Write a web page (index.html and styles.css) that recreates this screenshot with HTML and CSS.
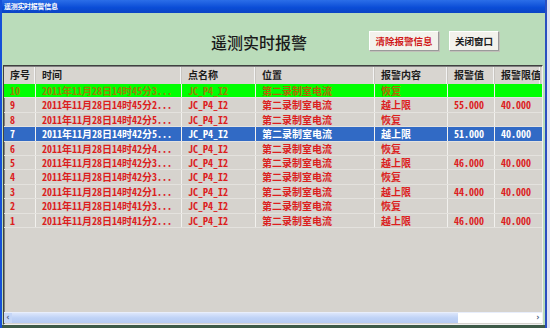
FILE: index.html
```html
<!DOCTYPE html>
<html lang="zh">
<head>
<meta charset="utf-8">
<title>遥测实时报警信息</title>
<link rel="stylesheet" href="styles.css">
</head>
<body>
<div class="desk">
  <div class="window">
    <div class="titlebar">遥测实时报警信息</div>
    <div class="content">
      <div class="top">
        <h1 class="title">遥测实时报警</h1>
        <button class="btn btn-red">清除报警信息</button>
        <button class="btn">关闭窗口</button>
      </div>
      <div class="grid">
        <div class="row head">
          <div class="c c1">序号</div><div class="c c2">时间</div><div class="c c3">点名称</div><div class="c c4">位置</div><div class="c c5">报警内容</div><div class="c c6">报警值</div><div class="c c7">报警限值</div>
        </div>
        <div class="row green">
          <div class="c c1">10</div><div class="c c2">2011年11月28日14时45分3...</div><div class="c c3">JC_P4_I2</div><div class="c c4">第二录制室电流</div><div class="c c5">恢复</div><div class="c c6"></div><div class="c c7"></div>
        </div>
        <div class="row">
          <div class="c c1">9</div><div class="c c2">2011年11月28日14时45分2...</div><div class="c c3">JC_P4_I2</div><div class="c c4">第二录制室电流</div><div class="c c5">越上限</div><div class="c c6">55.000</div><div class="c c7">40.000</div>
        </div>
        <div class="row">
          <div class="c c1">8</div><div class="c c2">2011年11月28日14时42分5...</div><div class="c c3">JC_P4_I2</div><div class="c c4">第二录制室电流</div><div class="c c5">恢复</div><div class="c c6"></div><div class="c c7"></div>
        </div>
        <div class="row sel">
          <div class="c c1">7</div><div class="c c2">2011年11月28日14时42分5...</div><div class="c c3">JC_P4_I2</div><div class="c c4">第二录制室电流</div><div class="c c5">越上限</div><div class="c c6">51.000</div><div class="c c7">40.000</div>
        </div>
        <div class="row">
          <div class="c c1">6</div><div class="c c2">2011年11月28日14时42分4...</div><div class="c c3">JC_P4_I2</div><div class="c c4">第二录制室电流</div><div class="c c5">恢复</div><div class="c c6"></div><div class="c c7"></div>
        </div>
        <div class="row">
          <div class="c c1">5</div><div class="c c2">2011年11月28日14时42分3...</div><div class="c c3">JC_P4_I2</div><div class="c c4">第二录制室电流</div><div class="c c5">越上限</div><div class="c c6">46.000</div><div class="c c7">40.000</div>
        </div>
        <div class="row">
          <div class="c c1">4</div><div class="c c2">2011年11月28日14时42分3...</div><div class="c c3">JC_P4_I2</div><div class="c c4">第二录制室电流</div><div class="c c5">恢复</div><div class="c c6"></div><div class="c c7"></div>
        </div>
        <div class="row">
          <div class="c c1">3</div><div class="c c2">2011年11月28日14时42分1...</div><div class="c c3">JC_P4_I2</div><div class="c c4">第二录制室电流</div><div class="c c5">越上限</div><div class="c c6">44.000</div><div class="c c7">40.000</div>
        </div>
        <div class="row">
          <div class="c c1">2</div><div class="c c2">2011年11月28日14时41分3...</div><div class="c c3">JC_P4_I2</div><div class="c c4">第二录制室电流</div><div class="c c5">恢复</div><div class="c c6"></div><div class="c c7"></div>
        </div>
        <div class="row">
          <div class="c c1">1</div><div class="c c2">2011年11月28日14时41分2...</div><div class="c c3">JC_P4_I2</div><div class="c c4">第二录制室电流</div><div class="c c5">越上限</div><div class="c c6">46.000</div><div class="c c7">40.000</div>
        </div>
        <div class="empty"></div>
        <div class="hscroll">
          <span class="arr">&#8249;</span>
          <div class="thumb"></div>
          <div class="track"></div>
          <span class="arr arr-r">&#8250;</span>
        </div>
      </div>
    </div>
  </div>
  <div class="edge"></div>
</div>
</body>
</html>
```

FILE: styles.css
```css
html, body {
  margin: 0;
  padding: 0;
}
body {
  width: 550px;
  height: 328px;
  overflow: hidden;
  background: #dfe3f3;
  font-family: "Noto Sans CJK SC", sans-serif;
}
.desk {
  display: flex;
  height: 328px;
}
.window {
  width: 543px;
  height: 328px;
  display: flex;
  flex-direction: column;
  border-left: 2px solid #1550d8;
  background: #3d5a48;
}
.edge {
  width: 2px;
  background: #2a4fc0;
}
.titlebar {
  height: 13px;
  flex: none;
  background: linear-gradient(#2b6ee8, #0a4cd6 60%, #0b45c4);
  color: #fff;
  font-size: 7px;
  font-weight: bold;
  line-height: 13px;
  padding-left: 2px;
  letter-spacing: -0.3px;
}
.content {
  flex: 1;
  display: flex;
  flex-direction: column;
  background: #badcba;
  margin-bottom: 3px;
}
.top {
  height: 52px;
  flex: none;
  display: flex;
  align-items: center;
  padding: 4px 0 0 209px;
  box-sizing: border-box;
}
.title {
  margin: 0;
  font-size: 16px;
  font-weight: 500;
  color: #1a1a1a;
  letter-spacing: 0;
  width: 97px;
  margin-top: 2px;
}
.btn {
  height: 20px;
  padding: 0;
  font-family: "Noto Sans CJK SC", sans-serif;
  font-size: 9.5px;
  font-weight: bold;
  color: #202020;
  background: #f3f2ec;
  border: 1px solid;
  border-color: #ffffff #9a9a9a #9a9a9a #ffffff;
  box-shadow: 1px 1px 0 #c0c0b8;
  width: 50px;
  margin-left: 10px;
}
.btn-red {
  color: #d01818;
  width: 70px;
  margin-left: 61px;
}
.grid {
  flex: 1;
  width: 538px;
  margin-left: 1px;
  margin-right: 2px;
  display: flex;
  flex-direction: column;
  background: #d6d3ce;
  border: 1px solid;
  border-color: #404040 #f0f0f0 #f0f0f0 #404040;
  box-shadow: inset 1px 1px 0 #808080;
  font-family: "Noto Sans Mono CJK SC", "Noto Sans CJK SC", monospace;
  font-size: 10px;
  font-weight: bold;
}
.row {
  display: flex;
  height: 14.4px;
  line-height: 14px;
  color: #dc1e1e;
  border-bottom: 1px solid #e4e2de;
  box-sizing: border-box;
  flex: none;
}
.row.head {
  height: 17px;
  line-height: 16px;
  color: #1c1c1c;
  background: #d8d5d0;
  border-bottom: none;
  margin-top: 1px;
}
.c {
  padding-left: 6px;
  box-sizing: border-box;
  border-right: 1px solid #f2f1ee;
  white-space: nowrap;
  overflow: hidden;
}
.head .c {
  border-right: 1px solid #c8c5c0;
  box-shadow: inset -1px 0 0 #f4f4f4;
}
.c1 { width: 32px; }
.c2 { width: 146px; }
.c3 { width: 74px; }
.c4 { width: 119px; }
.c5 { width: 73px; }
.c6 { width: 47px; }
.c7 { width: 46px; border-right: none; }
.green {
  background: #00ff00;
  color: #b46400;
}
.green .c1, .green .c2, .green .c3 {
  color: #9a8200;
}
.sel {
  background: #316ac5;
  color: #ffffff;
}
.empty {
  flex: 1;
}
.hscroll {
  height: 10px;
  flex: none;
  display: flex;
  align-items: center;
  background: #ffffff;
  border-top: 1px solid #e8eefc;
  margin-bottom: 1px;
  font-size: 8px;
  line-height: 10px;
  font-family: "DejaVu Sans", sans-serif;
}
.arr {
  width: 8px;
  text-align: center;
  color: #4d6185;
  background: #c5d6f7;
  height: 10px;
}
.arr-r {
  background: #ffffff;
}
.thumb {
  width: 446px;
  height: 10px;
  background: linear-gradient(#dce6fb, #bfd2f6 50%, #b6cbf3);
}
.track {
  flex: 1;
  height: 10px;
  background: #ffffff;
}
```
